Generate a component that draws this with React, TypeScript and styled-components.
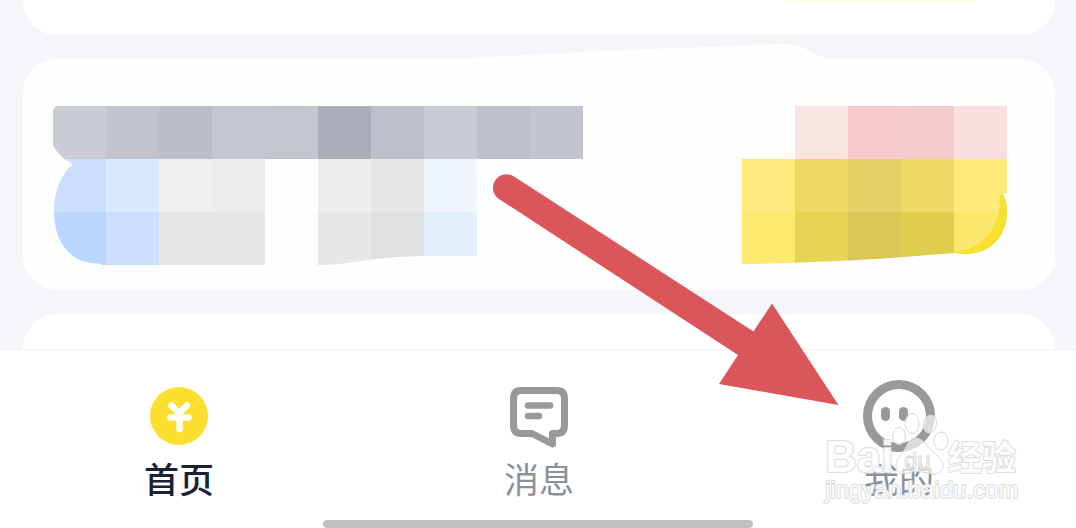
import React from "react";
import styled, { createGlobalStyle } from "styled-components";

const GlobalStyle = createGlobalStyle`
  * { box-sizing: border-box; }
  body {
    margin: 0;
    background: #f5f6fa;
    font-family: "Liberation Sans", "Noto Sans CJK SC", sans-serif;
  }
`;

const Page = styled.div`
  position: relative;
  display: flex;
  flex-direction: column;
  min-height: 100vh;
  overflow: hidden;
`;

const Feed = styled.main`
  display: flex;
  flex-direction: column;
  gap: 24px;
  flex: 1;
  padding: 0 21px 0 23px;
`;

const CardTail = styled.section`
  display: flex;
  justify-content: flex-end;
  height: 35px;
  padding-right: 80px;
  border-radius: 0 0 34px 34px;
  background: #fff;
`;

const ButtonEdge = styled.div`
  width: 190px;
  height: 2px;
  background: #fbfde2;
`;

const Card = styled.section`
  position: relative;
  display: flex;
  justify-content: space-between;
  align-items: flex-start;
  padding: 47px 48px 24px 30px;
  border-radius: 34px;
  background: #fefefe;
`;

const CardHead = styled.section`
  height: 35px;
  border-radius: 34px 34px 0 0;
  background: #fff;
`;

const Mosaic = styled.svg`
  display: block;
  flex: none;
`;

const Smear = styled.svg`
  position: absolute;
  top: -16px;
  right: 223px;
`;

const TabBar = styled.nav`
  border-top: 1px solid #f1f2f4;
  background: #fff;
  padding-top: 30px;
`;

const Tabs = styled.div`
  display: flex;
  justify-content: space-between;
  padding: 0 141px 0 143px;
`;

const Tab = styled.button<{ $active?: boolean }>`
  display: flex;
  flex-direction: column;
  align-items: center;
  gap: 6px;
  width: 72px;
  padding: 0;
  border: 0;
  background: none;
  color: ${(p) => (p.$active ? "#1b2236" : "#8b919b")};
  font-family: "Noto Sans CJK SC", sans-serif;
  font-size: 35px;
  font-weight: ${(p) => (p.$active ? 500 : 400)};
  line-height: 40px;
  white-space: nowrap;
  cursor: pointer;
`;

const HomeIndicator = styled.div`
  width: 40%;
  height: 8px;
  margin: 22px auto 0;
  border-radius: 4px;
  background: #c1c1c1;
`;

const Arrow = styled.svg`
  position: absolute;
  top: 170px;
  right: 236px;
  pointer-events: none;
`;

const Watermark = styled.svg`
  position: absolute;
  right: 52px;
  bottom: 18px;
  pointer-events: none;
`;

const CELL = 53;

const titleCells = [
  ["#cacdd3", "#c1c4cd", "#bbbec8", "#c3c6d0", "#c3c6cc", "#abadba", "#bbc0ca", "#c9ccd2", "#bdc0ca", "#c2c5ce"],
  ["#cbdefb", "#d8eaff", "#efefef", "#ebeced", "", "#ededee", "#e5e6e7", "#eff5ff"],
  ["#bad8ff", "#cbdffe", "#e5e6e7", "#e5e6e7", "#fdfdfd", "#e6e7e8", "#dee0e2", "#e3f0fb"],
];

const actionCells = [
  ["", "#fae4e3", "#f8cacb", "#f4cccc", "#f9dfe0"],
  ["#fceb7c", "#ecda63", "#e2d263", "#ecda65", "#fdea7b"],
  ["#fce970", "#e5d552", "#d8c858", "#dfce4e", "#fbe76c"],
];

function Cells({ rows }: { rows: string[][] }) {
  return (
    <>
      {rows.map((row, y) =>
        row.map((fill, x) =>
          fill ? (
            <rect key={`${x}-${y}`} x={x * CELL} y={y * CELL} width={CELL} height={CELL} fill={fill} />
          ) : null
        )
      )}
    </>
  );
}

function CoinIcon() {
  return (
    <svg width="72" height="72" viewBox="0 0 72 72" aria-hidden="true">
      <circle cx="36" cy="36" r="29" fill="#fde02f" />
      <path
        d="M28.500 25.500L36 33L44 25.500M27.500 37.500H45.500M36.500 34V49"
        fill="none"
        stroke="#fff"
        strokeWidth="6.500"
        strokeLinecap="round"
        strokeLinejoin="round"
      />
    </svg>
  );
}

function MessageIcon() {
  return (
    <svg width="72" height="72" viewBox="0 0 72 72" aria-hidden="true">
      <g fill="none" stroke="#999" strokeLinejoin="round" strokeLinecap="round">
        <path
          d="M18 10.500H54Q61.500 10.500 61.500 18.500V45Q61.500 53.500 54 53.500H49.500V64L29 53.500H18Q10.500 53.500 10.500 45V18.500Q10.500 10.500 18 10.500Z"
          strokeWidth="7"
        />
        <path d="M25 25.500H47M25 36H36" strokeWidth="6.500" />
      </g>
    </svg>
  );
}

function FaceIcon() {
  return (
    <svg width="72" height="72" viewBox="0 0 72 72" aria-hidden="true">
      <circle cx="36" cy="36" r="31.500" fill="none" stroke="#999" strokeWidth="9" />
      <rect x="18" y="27" width="9" height="14" rx="4.500" fill="#999" />
      <rect x="36" y="27" width="9" height="14" rx="4.500" fill="#999" />
    </svg>
  );
}

export default function App() {
  return (
    <>
      <GlobalStyle />
      <Page>
        <Feed>
          <CardTail>
            <ButtonEdge />
          </CardTail>
          <Card>
            <Smear width="380" height="20" viewBox="0 0 380 20" aria-hidden="true">
              <path d="M0 17C90 9 240 5 300 2C330 0 342 0 350 4C360 9 366 15 380 16V20H0Z" fill="#fefefe" />
            </Smear>
            <Mosaic width="530" height="160" viewBox="0 0 530 160" aria-hidden="true">
              <clipPath id="title-shape">
                <path d="M3 0H530V53H424V150H371C350 150 320 153 300 156Q285 159 265 159H50L45 157.500C18 158 1 136 1 106C1 84 8 69 20 58Q9 54 0 40V4Z" />
              </clipPath>
              <g clipPath="url(#title-shape)">
                <Cells rows={titleCells} />
              </g>
            </Mosaic>
            <Mosaic width="265" height="160" viewBox="0 0 265 160" aria-hidden="true">
              <clipPath id="action-shape">
                <path d="M0 0H265V87L261 88C264 94 265 99 265 106C265 132 246 149 222 148L212 147C140 153 80 157 0 158Z" />
              </clipPath>
              <g clipPath="url(#action-shape)">
                <Cells rows={actionCells} />
                <path d="M258 89C259 120 242 144 212 146V150H240L268 130V87Z" fill="#f8e031" />
              </g>
            </Mosaic>
          </Card>
          <CardHead />
        </Feed>
        <TabBar>
          <Tabs>
            <Tab type="button" $active>
              <CoinIcon />
              <span>首页</span>
            </Tab>
            <Tab type="button">
              <MessageIcon />
              <span>消息</span>
            </Tab>
            <Tab type="button">
              <FaceIcon />
              <span>我的</span>
            </Tab>
          </Tabs>
          <HomeIndicator />
        </TabBar>
        <Arrow width="350" height="240" viewBox="490 170 350 240" aria-hidden="true">
          <path
            d="M514 176.500L753.500 331.500L772 303.500L838.500 405L719 384L738 355L499 199A13.500 13.500 0 0 1 514 176.500Z"
            fill="#db565b"
          />
        </Arrow>
        <Watermark width="204" height="100" viewBox="820 410 204 100" aria-label="Baidu经验">
          <g fill="#fff" fillOpacity="0.65" stroke="#d8d8d8" strokeWidth="1">
            <ellipse cx="899" cy="436" rx="6.500" ry="8.500" />
            <ellipse cx="912" cy="423.500" rx="7" ry="10" />
            <ellipse cx="930" cy="424" rx="6.500" ry="9" transform="rotate(14 930 424)" />
            <ellipse cx="941" cy="441" rx="7" ry="9" />
            <path d="M915 438C923 438 926 445 931 450C937 456 944 460 943 467C942 474 934 475 928 473Q915 470 908 473C901 475 896 473 896 466C896 459 901 455 905 449C908 443 910 438 915 438Z" />
            <text x="904" y="469" fontSize="24">du</text>
          </g>
          <g fill="#fff" fillOpacity="0.9" stroke="#dedede" strokeWidth="2" strokeLinejoin="round" paintOrder="stroke">
            <text x="825" y="472" fontSize="44" fontWeight="700">Bai</text>
            <text x="948" y="470" fontSize="34" fontWeight="700" fontFamily="Noto Sans CJK SC, sans-serif">经验</text>
            <text x="825" y="498" fontSize="24">jingyan.baidu.com</text>
          </g>
        </Watermark>
      </Page>
    </>
  );
}
